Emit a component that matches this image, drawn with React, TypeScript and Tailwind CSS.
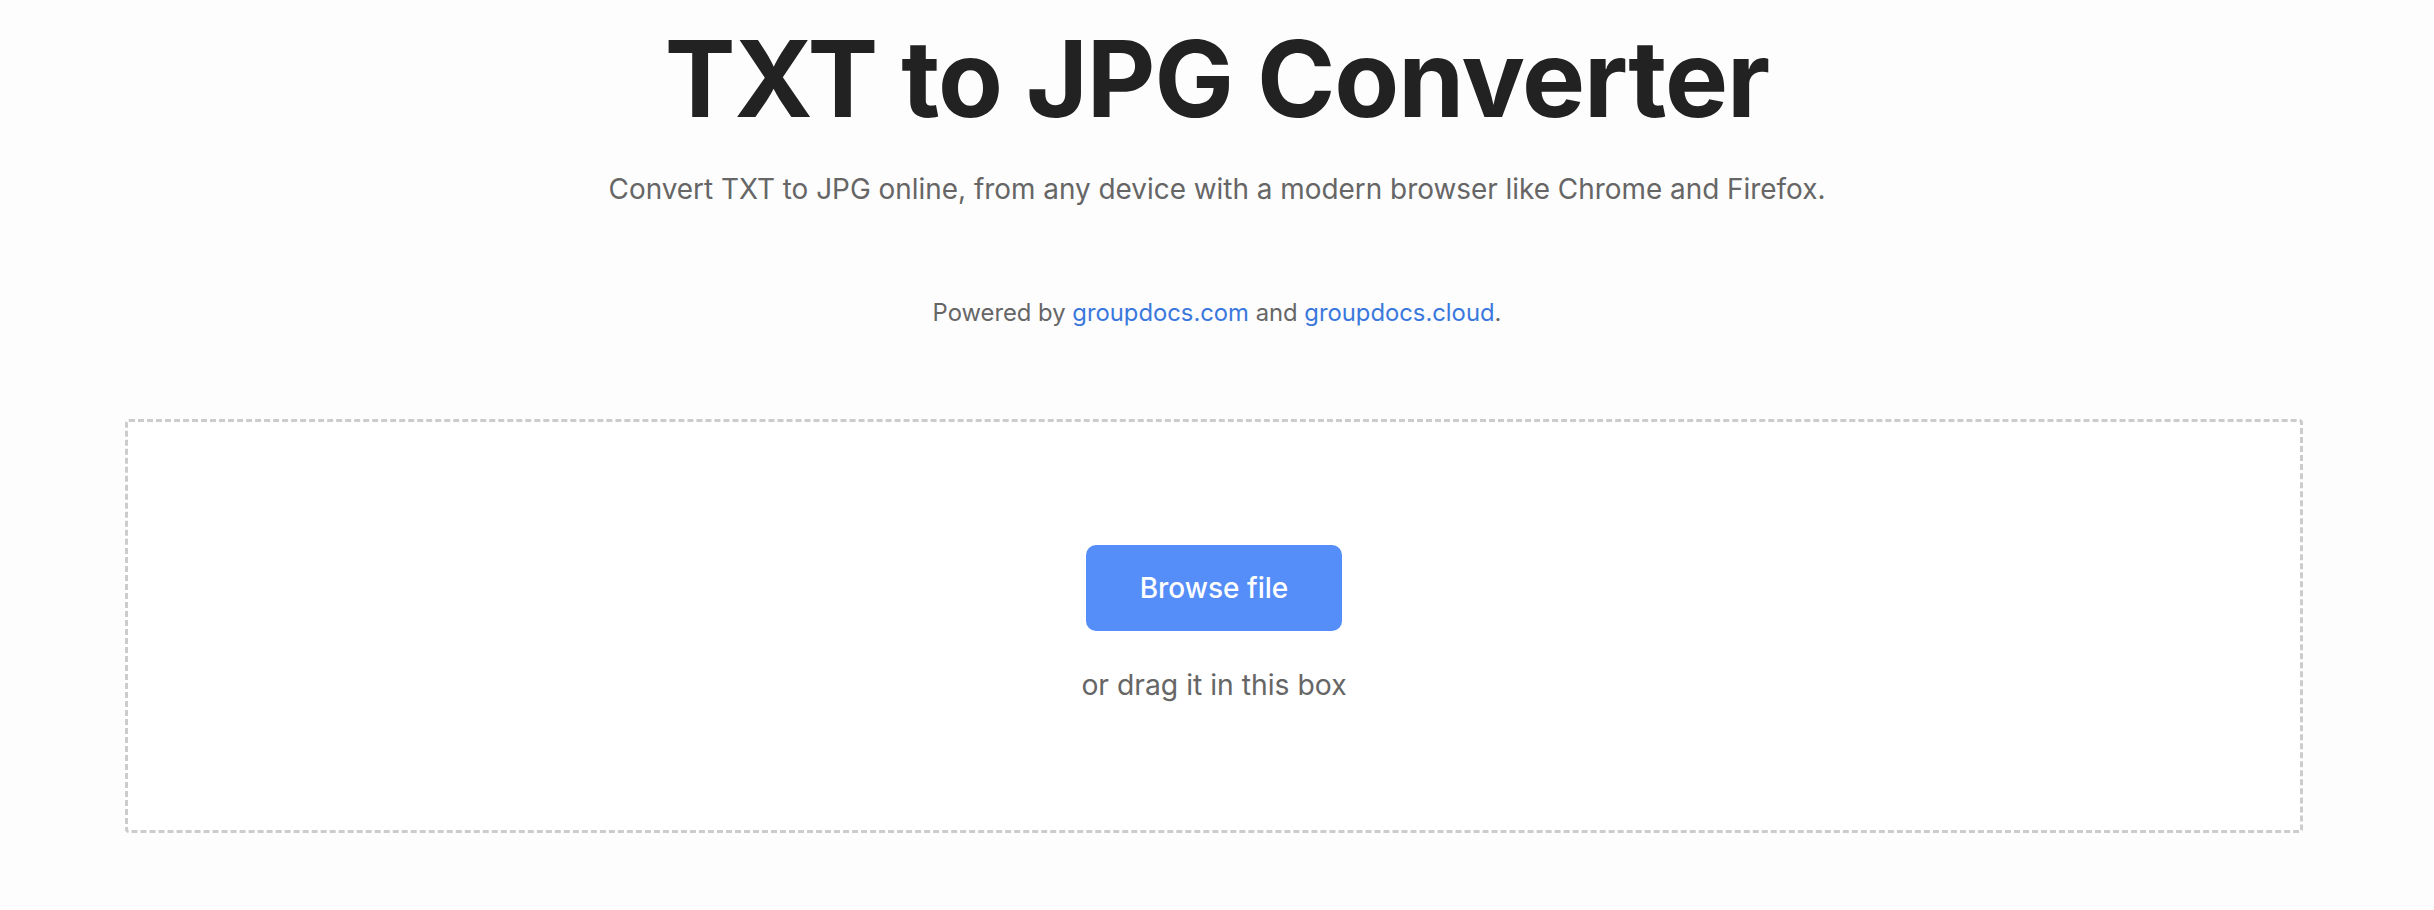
import React from 'react';

const App: React.FC = () => {
  return (
    <div
      className="min-h-[910px] w-full bg-[#fdfdfd] text-center"
      style={{ fontFamily: 'Inter, "Noto Sans", sans-serif' }}
    >
      <h1 className="pt-[26px] text-[106px] leading-none font-bold text-[#222222] tracking-[-0.01em]">
        TXT to JPG Converter
      </h1>
      <p className="mt-[44px] text-[27.9px] leading-none text-[#666666]">
        Convert TXT to JPG online, from any device with a modern browser like Chrome and Firefox.
      </p>
      <p className="mt-[97px] text-[23.8px] leading-none text-[#666666]">
        Powered by{' '}
        <a href="#" className="text-[#3b78de]">groupdocs.com</a> and{' '}
        <a href="#" className="text-[#3b78de]">groupdocs.cloud</a>.
      </p>

      <div className="pt-[94px] pl-[125px]">
        <div className="flex h-[414px] w-[2178px] flex-col items-center justify-center rounded-[4px] border-[3px] border-dashed border-[#cccccc] bg-white">
          <button className="mt-[-8px] h-[86px] w-[256px] rounded-[10px] bg-[#558ef8] text-[28px] font-medium text-white">
            Browse file
          </button>
          <p className="mt-[40px] text-[28.3px] leading-none text-[#666666]">or drag it in this box</p>
        </div>
      </div>
    </div>
  );
};

export default App;
